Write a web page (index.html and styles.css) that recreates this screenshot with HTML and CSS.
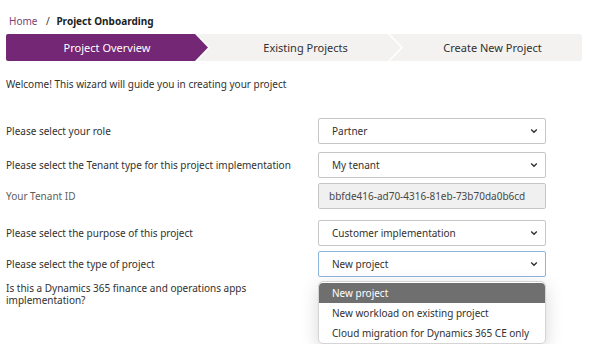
FILE: index.html
```html
<!DOCTYPE html>
<html lang="en">
<head>
    <meta charset="UTF-8">
    <meta name="viewport" content="width=device-width, initial-scale=1.0">
    <title>Project Onboarding</title>
    <link rel="stylesheet" href="styles.css">
</head>
<body>
    <div class="page">
        <div class="breadcrumb">
            <a href="#">Home</a>
            <span class="sep">/</span>
            <strong>Project Onboarding</strong>
        </div>

        <div class="stepper">
            <div class="step first active">Project Overview</div>
            <div class="step middle">Existing Projects</div>
            <div class="step last">Create New Project</div>
        </div>

        <p class="welcome">Welcome! This wizard will guide you in creating your project</p>

        <div class="form">
            <div class="row row-role">
                <label>Please select your role</label>
                <div class="select">
                    <span>Partner</span>
                    <svg class="chev" width="8" height="6" viewBox="0 0 8 6"><path d="M1.2 1.5 L4 4.3 L6.8 1.5" fill="none" stroke="#323130" stroke-width="1.4"/></svg>
                </div>
            </div>
            <div class="row row-tenant">
                <label>Please select the Tenant type for this project implementation</label>
                <div class="select">
                    <span>My tenant</span>
                    <svg class="chev" width="8" height="6" viewBox="0 0 8 6"><path d="M1.2 1.5 L4 4.3 L6.8 1.5" fill="none" stroke="#323130" stroke-width="1.4"/></svg>
                </div>
            </div>
            <div class="row row-id">
                <label class="muted">Your Tenant ID</label>
                <div class="input disabled">bbfde416-ad70-4316-81eb-73b70da0b6cd</div>
            </div>
            <div class="row row-purpose">
                <label>Please select the purpose of this project</label>
                <div class="select">
                    <span>Customer implementation</span>
                    <svg class="chev" width="8" height="6" viewBox="0 0 8 6"><path d="M1.2 1.5 L4 4.3 L6.8 1.5" fill="none" stroke="#323130" stroke-width="1.4"/></svg>
                </div>
            </div>
            <div class="row row-type">
                <label>Please select the type of project</label>
                <div class="select focused">
                    <span>New project</span>
                    <svg class="chev" width="8" height="6" viewBox="0 0 8 6"><path d="M1.2 1.5 L4 4.3 L6.8 1.5" fill="none" stroke="#323130" stroke-width="1.4"/></svg>
                </div>
            </div>
            <div class="row row-question">
                <label class="wrap">Is this a Dynamics 365 finance and operations apps implementation?</label>
                <ul class="options">
                    <li class="selected">New project</li>
                    <li>New workload on existing project</li>
                    <li>Cloud migration for Dynamics 365 CE only</li>
                </ul>
            </div>
        </div>
    </div>
</body>
</html>
```

FILE: styles.css
```css
body {
    margin: 0;
    padding: 0;
    background-color: #fff;
    font-family: "Noto Sans", "Open Sans", sans-serif;
    font-size: 10px;
    color: #323130;
}
.page {
    padding: 0 6px;
}
.breadcrumb {
    height: 34px;
    box-sizing: border-box;
    padding: 14px 0 0 3px;
    line-height: 14px;
}
.breadcrumb a {
    color: #7a3f7a;
    text-decoration: none;
}
.breadcrumb .sep {
    margin: 0 4px 0 6px;
}
.breadcrumb strong {
    font-weight: 700;
    color: #201f1e;
}
.stepper {
    display: flex;
    width: 576px;
    height: 27px;
}
.step {
    display: flex;
    align-items: center;
    justify-content: center;
    font-size: 11px;
    background-color: #f3f2f1;
    color: #323130;
}
.step.first {
    width: 202px;
    border-radius: 2px 0 0 2px;
    clip-path: polygon(0 0, calc(100% - 13px) 0, 100% 50%, calc(100% - 13px) 100%, 0 100%);
}
.step.middle {
    width: 204px;
    margin-left: -11px;
    padding-left: 13px;
    box-sizing: border-box;
    clip-path: polygon(0 0, calc(100% - 13px) 0, 100% 50%, calc(100% - 13px) 100%, 0 100%, 13px 50%);
}
.step.last {
    flex: 1;
    margin-left: -11px;
    padding-left: 13px;
    border-radius: 0 2px 2px 0;
    clip-path: polygon(0 0, 100% 0, 100% 100%, 0 100%, 13px 50%);
}
.step.active {
    background-color: #742774;
    color: #fff;
}
.welcome {
    margin: 0;
    padding-top: 16px;
    height: 41px;
    line-height: 14px;
}
.row {
    display: flex;
    align-items: center;
}
.row label {
    width: 312px;
}
.row label.muted {
    color: #605e5c;
}
.row label.wrap {
    width: 270px;
    margin-right: 42px;
    line-height: 12px;
    padding-top: 1px;
}
.row-tenant {
    margin-top: 8px;
}
.row-id {
    margin-top: 5px;
}
.row-purpose {
    margin-top: 11px;
}
.row-type {
    margin-top: 5px;
}
.row-question {
    margin-top: 4px;
    align-items: flex-start;
}
.select,
.input {
    width: 228px;
    height: 26px;
    box-sizing: border-box;
    border: 1px solid #c8c6c4;
    border-radius: 2px;
    display: flex;
    align-items: center;
    padding: 0 0 0 13px;
    background-color: #fff;
}
.select span {
    flex: 1;
}
.select .chev {
    margin-right: 7px;
}
.select.focused {
    border-color: #8fb4de;
}
.input.disabled {
    background-color: #f0f0f0;
    color: #494847;
    padding-left: 10px;
}
.options {
    width: 228px;
    margin: 0;
    padding: 1px 0 0;
    list-style: none;
    background-color: #fff;
    border: 1px solid #d4d4d4;
    border-radius: 5px;
    box-shadow: 0 5px 18px rgba(0, 0, 0, 0.16);
    box-sizing: border-box;
    overflow: hidden;
}
.options li {
    height: 20px;
    line-height: 20px;
    padding-left: 13px;
    color: #323130;
}
.options li.selected {
    background-color: #6f6f6f;
    color: #fff;
    border-radius: 4px 4px 0 0;
}
```
